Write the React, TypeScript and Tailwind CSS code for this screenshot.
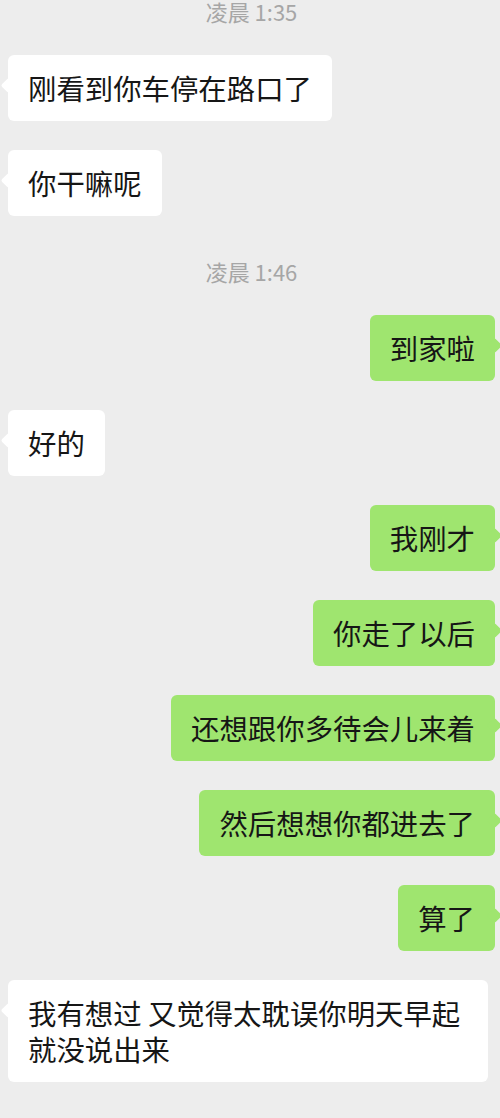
import React from "react";

type Item =
  | { kind: "time"; text: string }
  | { kind: "msg"; side: "left" | "right"; text: string };

// WeChat-style chat log, cropped so avatars sit just outside the frame.
const ITEMS: Item[] = [
  { kind: "time", text: "凌晨 1:35" },
  { kind: "msg", side: "left", text: "刚看到你车停在路口了" },
  { kind: "msg", side: "left", text: "你干嘛呢" },
  { kind: "time", text: "凌晨 1:46" },
  { kind: "msg", side: "right", text: "到家啦" },
  { kind: "msg", side: "left", text: "好的" },
  { kind: "msg", side: "right", text: "我刚才" },
  { kind: "msg", side: "right", text: "你走了以后" },
  { kind: "msg", side: "right", text: "还想跟你多待会儿来着" },
  { kind: "msg", side: "right", text: "然后想想你都进去了" },
  { kind: "msg", side: "right", text: "算了" },
  { kind: "msg", side: "left", text: "我有想过 又觉得太耽误你明天早起就没说出来" },
];

const FONT = {
  fontFamily: '"Noto Sans CJK SC", "Noto Sans", "Liberation Sans", sans-serif',
};

function Bubble({ side, text }: { side: "left" | "right"; text: string }) {
  const left = side === "left";
  return (
    <div className={left ? "flex justify-start" : "flex justify-end"}>
      <div
        className={
          "relative max-w-[480px] rounded-[6px] px-[20px] py-[15px] text-[28.4px] leading-[36px] text-[#161616] " +
          (left ? "bg-white" : "bg-[#9fe56f]")
        }
      >
        {/* tail */}
        <span
          className={
            "absolute top-[25px] h-[11px] w-[11px] rotate-45 rounded-[2px] " +
            (left ? "-left-[5px] bg-white" : "-right-[5px] bg-[#9fe56f]")
          }
        />
        <span className="relative">{text}</span>
      </div>
    </div>
  );
}

export default function App() {
  return (
    <div
      className="h-[1118px] w-[500px] overflow-hidden bg-[#ededed] pl-[8px] pr-[5px]"
      style={FONT}
    >
      <div className="flex flex-col">
        {ITEMS.map((item, i) =>
          item.kind === "time" ? (
            <div
              key={i}
              className={
                "mb-[33px] text-center text-[22px] leading-[22px] text-[#a6a6a6] " +
                (i === 0 ? "mt-0" : "mt-[44px]")
              }
            >
              {item.text}
            </div>
          ) : (
            <div
              key={i}
              className={ITEMS[i - 1]?.kind === "time" ? "" : "mt-[29px]"}
            >
              <Bubble side={item.side} text={item.text} />
            </div>
          )
        )}
      </div>
    </div>
  );
}
